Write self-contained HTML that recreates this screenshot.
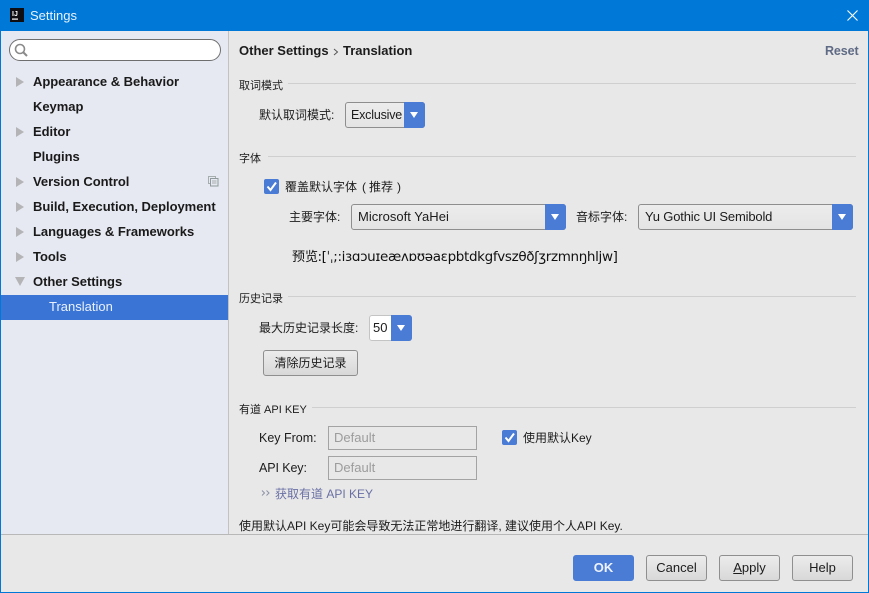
<!DOCTYPE html>
<html><head><meta charset="utf-8">
<style>
html,body{margin:0;padding:0}
body{width:869px;height:593px;overflow:hidden;position:relative;background:#e8e8e8;font-family:"Liberation Sans","Noto Sans CJK SC",sans-serif;font-size:13px;color:#1c1c1c}
.a{position:absolute;white-space:nowrap}
.t{position:absolute;white-space:nowrap;line-height:18px;height:18px}
.n{font-weight:bold;left:33px;font-size:13px;color:#1a1a1a;letter-spacing:-.03px}
.z{font-size:12px}
.h{font-size:11px}
.line{position:absolute;height:1px;background:#cfcfcf}
.tri{position:absolute;left:16px;width:0;height:0;border-left:8px solid #b4b4b6;border-top:5px solid transparent;border-bottom:5px solid transparent}
.combo{position:absolute;height:26px;box-sizing:border-box;border:1px solid #8e8e8e;border-radius:3px;background:linear-gradient(#ececec,#e4e4e4);line-height:24px;padding-left:6px;letter-spacing:.02px}
.arrow{position:absolute;right:-1px;top:-1px;width:21px;height:26px;background:#4a7bd5;border-radius:0 3px 3px 0}
.arrow:after{content:"";position:absolute;left:6px;top:10px;border-top:6px solid #fff;border-left:4.5px solid transparent;border-right:4.5px solid transparent}
.cb{position:absolute;width:15px;height:15px;background:#4a7bd5;border-radius:2px}
.btn{position:absolute;height:26px;box-sizing:border-box;border:1px solid #8f8f8f;border-radius:3px;background:linear-gradient(#ececec,#d8d8d8);text-align:center;line-height:24px}
.inp{position:absolute;left:328px;width:149px;height:24px;box-sizing:border-box;border:1px solid #a3a3a3;line-height:22px;padding-left:5px;color:#9c9c9c;background:#e8e8e8}
</style></head>
<body>
<!-- title bar -->
<div class="a" style="left:0;top:0;width:869px;height:31px;background:#0078d7"></div>
<svg class="a" style="left:10px;top:8px" width="14" height="14"><rect width="14" height="14" fill="#0d0d12"/><rect x="2" y="10.5" width="6" height="1.2" fill="#fff"/><text x="2" y="8" font-family="Liberation Sans" font-size="7" font-weight="bold" fill="#fff">IJ</text></svg>
<div class="t" style="left:30px;top:7px;color:#e8f2fb">Settings</div>
<svg class="a" style="left:847px;top:10px" width="11" height="11"><path d="M.5 .5L10.5 10.5M10.5 .5L.5 10.5" stroke="#fff" stroke-width="1.1" fill="none"/></svg>
<!-- sidebar -->
<div class="a" style="left:1px;top:31px;width:227px;height:503px;background:#e6e9f2"></div>
<div class="a" style="left:228px;top:31px;width:1px;height:503px;background:#c2c2c2"></div>
<div class="a" style="left:9px;top:39px;width:212px;height:22px;box-sizing:border-box;border:1px solid #6e6e6e;border-radius:11px;background:#fff"></div>
<svg class="a" style="left:13px;top:42px" width="16" height="16"><circle cx="7" cy="7" r="4.5" fill="none" stroke="#8a8a8a" stroke-width="1.6"/><path d="M10.5 10.5L14 14" stroke="#8a8a8a" stroke-width="2"/></svg>
<div class="tri" style="top:77px"></div>
<div class="t n" style="top:73px">Appearance &amp; Behavior</div>
<div class="t n" style="top:98px">Keymap</div>
<div class="tri" style="top:127px"></div>
<div class="t n" style="top:123px">Editor</div>
<div class="t n" style="top:148px">Plugins</div>
<div class="tri" style="top:177px"></div>
<div class="t n" style="top:173px">Version Control</div>
<svg class="a" style="left:208px;top:176px" width="11" height="11"><rect x=".5" y=".5" width="7" height="7" fill="none" stroke="#a5adad"/><rect x="2.5" y="2.5" width="7.5" height="7.5" fill="#e6e9f2" stroke="#8f9a9a"/><path d="M4 5h4.5M4 7h4.5" stroke="#a5adad"/></svg>
<div class="tri" style="top:202px"></div>
<div class="t n" style="top:198px">Build, Execution, Deployment</div>
<div class="tri" style="top:227px"></div>
<div class="t n" style="top:223px">Languages &amp; Frameworks</div>
<div class="tri" style="top:252px"></div>
<div class="t n" style="top:248px">Tools</div>
<div class="a" style="left:15px;top:277px;border-top:9px solid #b4b4b6;border-left:5px solid transparent;border-right:5px solid transparent"></div>
<div class="t n" style="top:273px">Other Settings</div>
<div class="a" style="left:1px;top:295px;width:227px;height:25px;background:#3a75d6"></div>
<div class="t" style="left:49px;top:298px;color:#eaf1fc">Translation</div>
<!-- header -->
<div class="t" style="left:239px;top:42px;font-weight:bold">Other Settings</div>
<svg class="a" style="left:333px;top:48px" width="6" height="8"><path d="M1 1L4.5 4L1 7" stroke="#555" fill="none"/></svg>
<div class="t" style="left:343px;top:42px;font-weight:bold">Translation</div>
<div class="t" style="left:825px;top:42px;font-weight:bold;color:#5f6b85;font-size:12.5px;letter-spacing:-.1px">Reset</div>
<!-- section 1 -->
<div class="t h" style="left:239px;top:77px">取词模式</div>
<div class="line" style="left:288px;top:83px;width:568px"></div>
<div class="t z" style="left:259px;top:106px">默认取词模式:</div>
<div class="combo" style="left:345px;top:102px;width:80px;padding-left:5px;font-size:12.5px;letter-spacing:-.2px">Exclusive<div class="arrow"></div></div>
<!-- section 2 -->
<div class="t h" style="left:239px;top:150px">字体</div>
<div class="line" style="left:268px;top:156px;width:588px"></div>
<div class="cb" style="left:264px;top:179px"><svg width="15" height="15" style="display:block"><path d="M3.5 7.5L6.5 11L12 3.5" stroke="#fff" stroke-width="2" fill="none"/></svg></div>
<div class="t z" style="left:285px;top:178px">覆盖默认字体<span style="margin:0 3px 0 5px">(</span>推荐<span style="margin-left:4px">)</span></div>
<div class="t z" style="left:289px;top:208px">主要字体:</div>
<div class="combo" style="left:351px;top:204px;width:215px">Microsoft YaHei<div class="arrow"></div></div>
<div class="t z" style="left:576px;top:208px">音标字体:</div>
<div class="combo" style="left:638px;top:204px;width:215px;letter-spacing:-.17px">Yu Gothic UI Semibold<div class="arrow"></div></div>
<div class="t" style="left:292px;top:247px;font-size:13.5px;font-family:'DejaVu Sans','Noto Sans CJK SC',sans-serif;letter-spacing:-.35px;color:#111"><span style="font-family:'Noto Sans CJK SC',sans-serif;font-size:13px;letter-spacing:0">预览:</span>[ˈˌ;:iɜɑɔuɪeæʌɒʊəaɛpbtdkgfvszθðʃʒrzmnŋhljw]</div>
<!-- section 3 -->
<div class="t h" style="left:239px;top:290px">历史记录</div>
<div class="line" style="left:288px;top:296px;width:568px"></div>
<div class="t z" style="left:259px;top:319px">最大历史记录长度:</div>
<div class="combo" style="left:369px;top:315px;width:43px;background:#fff;padding-left:3px;border-color:#c4c4c4">50<div class="arrow"></div></div>
<div class="btn z" style="left:263px;top:350px;width:95px">清除历史记录</div>
<!-- section 4 -->
<div class="t h" style="left:239px;top:401px">有道 API KEY</div>
<div class="line" style="left:312px;top:407px;width:544px"></div>
<div class="t" style="left:259px;top:429px;font-size:12.5px">Key From:</div>
<div class="inp" style="top:426px">Default</div>
<div class="cb" style="left:502px;top:430px"><svg width="15" height="15" style="display:block"><path d="M3.5 7.5L6.5 11L12 3.5" stroke="#fff" stroke-width="2" fill="none"/></svg></div>
<div class="t z" style="left:523px;top:429px">使用默认Key</div>
<div class="t" style="left:259px;top:459px;font-size:12.5px;letter-spacing:-.1px">API Key:</div>
<div class="inp" style="top:456px">Default</div>
<svg class="a" style="left:261px;top:489px" width="10" height="8"><path d="M1 1.5L3.5 4L1 6.5M5.5 1.5L8 4L5.5 6.5" stroke="#8d93a8" fill="none"/></svg>
<div class="t z" style="left:275px;top:485px;color:#6a70a4">获取有道 API KEY</div>
<div class="t z" style="left:239px;top:517px">使用默认API Key可能会导致无法正常地进行翻译, 建议使用个人API Key.</div>
<!-- bottom -->
<div class="a" style="left:1px;top:534px;width:867px;height:1px;background:#b8b8b8"></div>
<div class="btn" style="left:573px;top:555px;width:61px;background:#4a7bd5;border-color:#4a7bd5;color:#eef4ff;font-weight:bold">OK</div>
<div class="btn" style="left:646px;top:555px;width:61px">Cancel</div>
<div class="btn" style="left:719px;top:555px;width:61px"><u>A</u>pply</div>
<div class="btn" style="left:792px;top:555px;width:61px">Help</div>
<!-- window border -->
<div class="a" style="left:0;top:0;width:869px;height:593px;box-sizing:border-box;border:1px solid #0078d7;border-top:0;pointer-events:none"></div>
</body></html>
